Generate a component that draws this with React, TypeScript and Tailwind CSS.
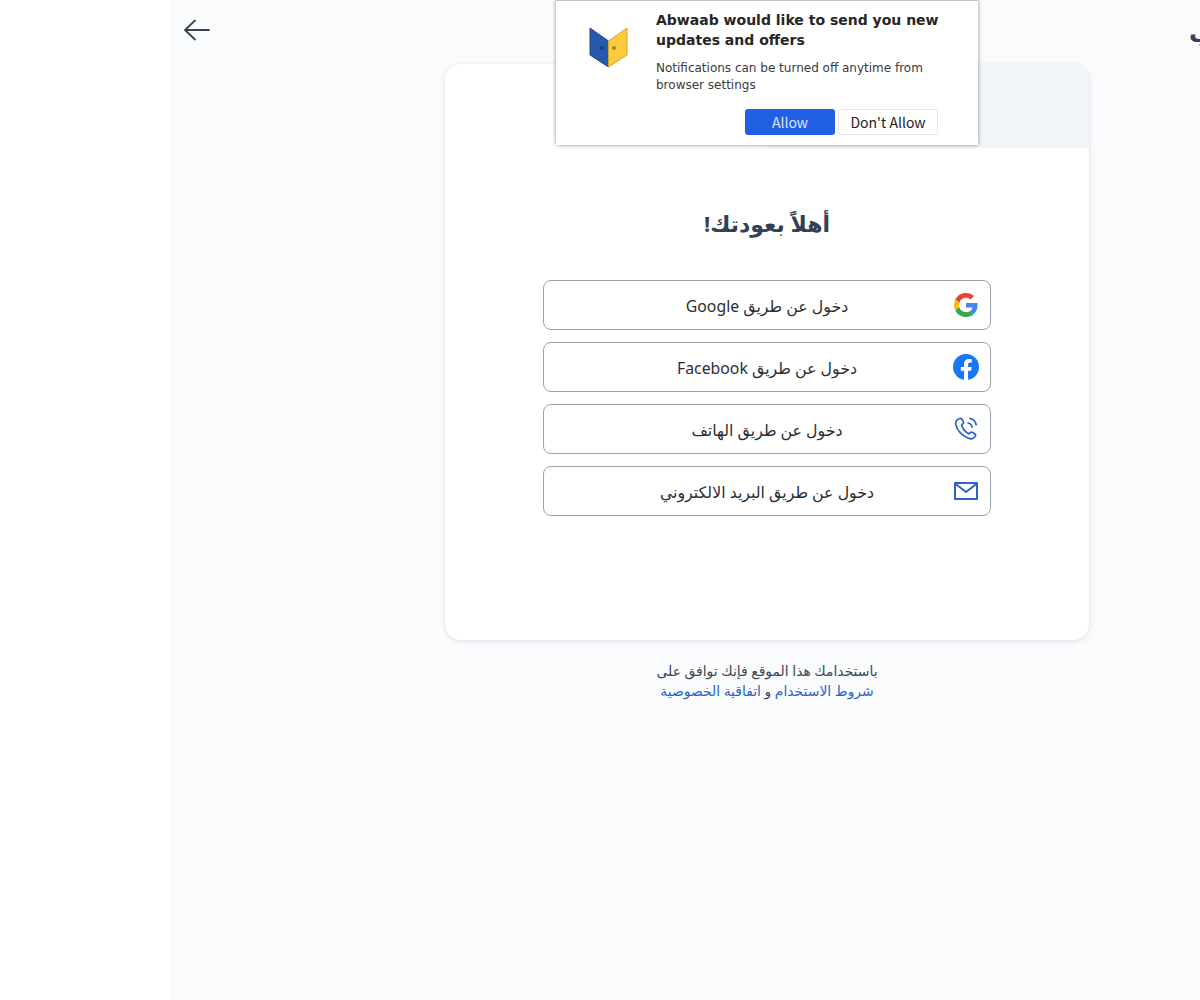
const arabicFont = "font-['Noto_Sans','DejaVu_Sans',sans-serif]";

const GoogleIcon = () => (
  <svg width="24" height="24" viewBox="0 0 48 48">
    <path fill="#EA4335" d="M24 9.500c3.500 0 6.700 1.200 9.200 3.600l6.900-6.900C35.900 2.400 30.400 0 24 0 14.600 0 6.500 5.400 2.600 13.200l8 6.200C12.400 13.700 17.700 9.500 24 9.500z" />
    <path fill="#4285F4" d="M47 24.500c0-1.600-.1-3.100-.4-4.500H24v9h12.900c-.6 3-2.200 5.500-4.700 7.200l7.700 6C44.400 38 47 31.800 47 24.500z" />
    <path fill="#FBBC05" d="M10.600 28.600c-.5-1.400-.8-3-.8-4.600s.3-3.200.8-4.600l-8-6.200C.9 16.500 0 20.100 0 24s.9 7.500 2.600 10.800l8-6.200z" />
    <path fill="#34A853" d="M24 48c6.500 0 11.900-2.100 15.900-5.800l-7.700-6c-2.200 1.400-4.900 2.300-8.200 2.300-6.300 0-11.600-4.200-13.400-9.900l-8 6.200C6.500 42.600 14.600 48 24 48z" />
  </svg>
);

const FacebookIcon = () => (
  <svg width="27" height="27" viewBox="0 0 24 24">
    <circle cx="12" cy="12" r="12" fill="#1877F2" />
    <path fill="#fff" d="M16.700 15.500l.5-3.500h-3.300V9.800c0-1 .5-1.900 2-1.900h1.500v-3s-1.400-.2-2.700-.2c-2.700 0-4.500 1.700-4.500 4.600V12h-3v3.500h3V24h3.700v-8.500h2.800z" />
  </svg>
);

const PhoneIcon = () => (
  <svg width="24" height="24" viewBox="0 0 24 24" fill="none" stroke="#2d62c4" strokeWidth="1.700" strokeLinecap="round" strokeLinejoin="round">
    <path d="M5.500 1.500c1-.5 1.800-.2 2.400.7l1.300 2.200c.5.900.3 1.700-.4 2.400L7.600 7.900c.6 3.500 3.900 7.500 7.400 9l1.300-1.200c.8-.7 1.600-.8 2.400-.2l2.100 1.500c.9.700 1 1.600.4 2.400-1.300 2-3.300 2.800-5.600 2.200C9 20 2.800 13.500 1.700 7.300 1.300 4.800 2.900 2.600 5.500 1.500z" />
    <path d="M14 6c2.200.4 3.700 1.900 4.200 4" />
    <path d="M16 1.500c3.300.7 5.500 3 6.200 6.200" />
  </svg>
);

const MailIcon = () => (
  <svg width="24" height="18" viewBox="0 0 24 18" fill="none" stroke="#2d62c4" strokeWidth="2" strokeLinejoin="round">
    <rect x="1" y="1" width="22" height="16" />
    <path d="M1 1.500l11 8.500 11-8.500" />
  </svg>
);

const BackArrow = () => (
  <svg width="28" height="22" viewBox="0 0 28 22" fill="none" stroke="#374151" strokeWidth="1.800" strokeLinecap="round" strokeLinejoin="round">
    <path d="M26 11H2M12 1.500L2 11l10 9.500" />
  </svg>
);

const LogoIcon = () => (
  <svg width="40" height="42" viewBox="0 0 40 42">
    <path fill="#2658ab" stroke="#27478c" strokeWidth="1" d="M1 2l18.500 13v26L1 29z" />
    <path fill="#fbcb3b" stroke="#d6a62c" strokeWidth="1" d="M38 2L19.500 15v26L38 29z" />
    <circle cx="13" cy="22" r="2" fill="#1f3d80" />
    <circle cx="25" cy="22" r="2" fill="#a9812a" />
  </svg>
);

const loginOptions = [
  { label: "دخول عن طريق Google", icon: <GoogleIcon /> },
  { label: "دخول عن طريق Facebook", icon: <FacebookIcon /> },
  { label: "دخول عن طريق الهاتف", icon: <PhoneIcon /> },
  { label: "دخول عن طريق البريد الالكتروني", icon: <MailIcon /> },
];

const NotificationPrompt = () => (
  <div className="absolute left-[556px] top-0 z-10 flex h-[145px] w-[422px] border-t border-[#c4c4c4] bg-white font-['DejaVu_Sans',sans-serif] shadow-[0_0_4px_rgba(0,0,0,0.45)]" dir="ltr">
    <div className="w-[100px] pl-[33px] pt-[25px]">
      <LogoIcon />
    </div>
    <div className="w-[282px] pt-[9px]">
      <p className="w-[300px] text-[14px] font-bold leading-5 text-[#262626]">
        Abwaab would like to send you new updates and offers
      </p>
      <p className="mt-[10px] text-xs leading-[17px] text-[#3a3a3a]">
        Notifications can be turned off anytime from browser settings
      </p>
      <div className="mt-[15px] flex justify-end gap-[3px] font-['Noto_Sans_CJK_SC',sans-serif] text-sm">
        <button className="h-[26px] w-[90px] rounded-[3px] bg-[#2160e4] text-[#dbe7ff]">Allow</button>
        <button className="h-[26px] w-[100px] rounded-[3px] border border-[#e8e8e8] bg-white text-[#222222]">Don't Allow</button>
      </div>
    </div>
  </div>
);

const App = () => {
  return (
    <div className="relative flex h-[1000px] w-[1200px] overflow-hidden bg-white" dir="rtl">
      <NotificationPrompt />
      <main className={`flex w-[1030px] flex-col bg-[#f9fbfd] ${arabicFont}`}>
        <header className="flex h-[64px] items-start justify-between pl-[13px] pt-[19px]">
          <span className="-mr-[13px] -mt-[2px] text-2xl font-bold text-[#374151]">ب</span>
          <BackArrow />
        </header>
        <div className="mr-[111px] flex h-[576px] w-[644px] flex-col rounded-[16px] bg-white shadow-[0_1px_5px_rgba(15,23,42,0.12)]">
          <div className="flex h-[84px]">
            <div className="w-[322px] rounded-tr-[16px] bg-[#f1f5f9]" />
            <div className="w-[322px]" />
          </div>
          <h1 className="mt-[59px] text-center text-[22px] font-bold leading-8 text-[#334155]">أهلاً بعودتك!</h1>
          <div className="mx-auto mt-[41px] flex w-[448px] flex-col gap-3">
            {loginOptions.map((option) => (
              <button
                key={option.label}
                className="relative flex h-[50px] items-center justify-center rounded-[8px] border border-[#9ca3af] bg-white pt-[4px] text-[15.8px] text-[#2a2e33]"
              >
                <span className="absolute right-[11px] top-1/2 flex w-[26px] -translate-y-1/2 justify-center">{option.icon}</span>
                {option.label}
              </button>
            ))}
          </div>
        </div>
        <p className="mr-[111px] mt-[21px] w-[644px] text-center text-[13.9px] leading-5 text-[#3b4656]">
          باستخدامك هذا الموقع فإنك توافق على
          <br />
          <span className="text-[#2d62c4]">شروط الاستخدام</span> و <span className="text-[#2d62c4]">اتفاقية الخصوصية</span>
        </p>
      </main>
      <aside className="w-[170px] bg-white" />
    </div>
  );
};

export default App;
